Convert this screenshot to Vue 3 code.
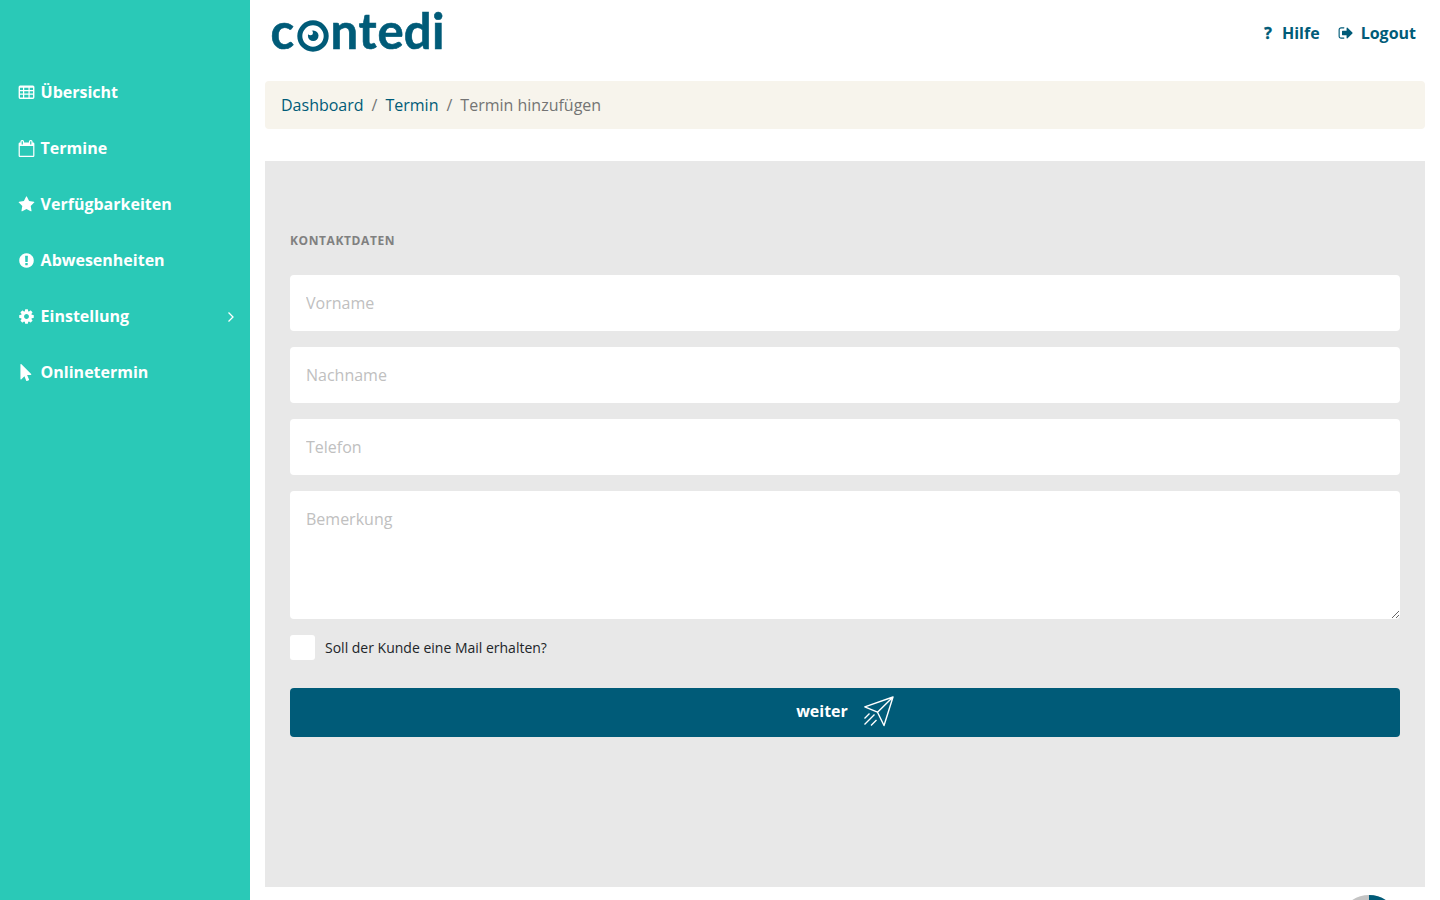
<template>
  <div class="layout">
    <aside class="sidebar">
      <nav class="sidebar-nav">
        <a v-for="item in menuItems" :key="item.label" class="sidebar-link" href="#">
          <svg class="sidebar-icon" viewBox="0 0 1792 1792">
            <path :d="item.icon" fill-rule="evenodd" />
          </svg>
          <span class="sidebar-label">{{ item.label }}</span>
          <svg v-if="item.hasChildren" class="sidebar-arrow" viewBox="0 0 8 12">
            <path d="M1.5 1.5 L6 6 L1.5 10.5" />
          </svg>
        </a>
      </nav>
    </aside>

    <main class="content">
      <header class="topbar">
        <svg class="logo" viewBox="0 0 190 68" role="img" aria-label="contedi">
          <text class="logo-text" y="48.6" x="5.6">c</text>
          <text class="logo-text" y="48.6" x="65.6 93.4 112.4 138.8 167">ntedi</text>
          <circle class="logo-ring" cx="48" cy="36" r="13.2" />
          <circle class="logo-pupil" cx="48.2" cy="35.8" r="5.3" />
          <circle class="logo-glint" cx="45.4" cy="32.8" r="2.5" />
        </svg>
        <div class="topbar-links">
          <a class="topbar-link" href="#">
            <span class="help-mark">?</span>
            <span>Hilfe</span>
          </a>
          <a class="topbar-link" href="#">
            <svg class="logout-icon" viewBox="0 0 1792 1792">
              <path :d="signOut" />
            </svg>
            <span>Logout</span>
          </a>
        </div>
      </header>

      <ol class="breadcrumb">
        <li><a href="#">Dashboard</a></li>
        <li><a href="#">Termin</a></li>
        <li>Termin hinzufügen</li>
      </ol>

      <form class="panel" @submit.prevent>
        <h6 class="panel-title">Kontaktdaten</h6>
        <input
          v-for="field in fields"
          :key="field.name"
          v-model="form[field.name]"
          class="field"
          type="text"
          :placeholder="field.label"
        />
        <textarea v-model="form.bemerkung" class="field field--area" placeholder="Bemerkung"></textarea>
        <label class="check">
          <input v-model="form.mail" class="check-input" type="checkbox" />
          <span>Soll der Kunde eine Mail erhalten?</span>
        </label>
        <button class="btn-next" type="submit">
          <span>weiter</span>
          <svg class="plane" viewBox="0 0 30 31">
            <path d="M29 1 L.8 10.8 L13.5 16.2 L20 29.5 Z M29 1 L13.5 16.2" />
            <path d="M5.5 17.5 L.5 22.5 M10.5 18.5 L.5 28.5 M12.5 24 L7 29.5" />
          </svg>
        </button>
      </form>
    </main>

    <svg class="ring" viewBox="0 0 60 60">
      <circle class="ring-track" cx="30" cy="30" r="27" />
      <path class="ring-value" d="M30 3 A27 27 0 0 1 57 30" />
    </svg>
  </div>
</template>

<script setup>
import { reactive } from 'vue'

const menuItems = [
  {
    label: 'Übersicht',
    icon: 'M224 160H1570Q1730 160 1730 320V1408Q1730 1568 1570 1568H224Q64 1568 64 1408V320Q64 160 224 160ZM208 400V640H528V400ZM656 400V640H1104V400ZM1232 400V640H1586V400ZM208 768V1008H528V768ZM656 768V1008H1104V768ZM1232 768V1008H1586V768ZM208 1136V1424H528V1136ZM656 1136V1424H1104V1136ZM1232 1136V1424H1586V1136Z',
  },
  {
    label: 'Termine',
    icon: 'M192 1664H1600V640H192ZM512 160Q512 128 480 128H416Q384 128 384 160V448Q384 480 416 480H480Q512 480 512 448ZM1408 160Q1408 128 1376 128H1312Q1280 128 1280 160V448Q1280 480 1312 480H1376Q1408 480 1408 448ZM1728 384V1664Q1728 1792 1600 1792H192Q64 1792 64 1664V384Q64 256 192 256H256V160Q256 0 416 0H480Q640 0 640 160V256H1152V160Q1152 0 1312 0H1376Q1536 0 1536 160V256H1600Q1728 256 1728 384Z',
  },
  {
    label: 'Verfügbarkeiten',
    icon: 'M1728 647q0 22-26 48l-363 354 86 500q1 7 1 20 0 21-10.5 35.5t-30.5 14.5q-19 0-40-12l-449-236-449 236q-22 12-40 12-21 0-31.5-14.5t-10.5-35.5q0-6 2-20l86-500-364-354q-25-27-25-48 0-37 56-46l502-73 225-455q19-41 49-41t49 41l225 455 502 73q56 9 56 46z',
  },
  {
    label: 'Abwesenheiten',
    icon: 'M896 128q209 0 385.5 103t279.5 279.5 103 385.5-103 385.5-279.5 279.5-385.5 103-385.5-103-279.5-279.5-103-385.5 103-385.5 279.5-279.5 385.5-103zm128 1247v-190q0-14-9-23.5t-22-9.5h-192q-13 0-23 10t-10 23v190q0 13 10 23t23 10h192q13 0 22-9.5t9-23.5zm-2-344l18-621q0-12-10-18-10-8-24-8h-220q-14 0-24 8-10 6-10 18l17 621q0 10 10 17.5t24 7.5h185q14 0 23.5-7.5t10.5-17.5z',
  },
  {
    label: 'Einstellung',
    hasChildren: true,
    icon: 'M1152 896q0-106-75-181t-181-75-181 75-75 181 75 181 181 75 181-75 75-181zm512-109v222q0 12-8 23t-20 13l-185 28q-19 54-39 91 35 50 107 138 10 12 10 25t-9 23q-27 37-99 108t-94 71q-12 0-26-9l-138-108q-44 23-91 38-16 136-29 186-7 28-36 28h-222q-14 0-24.5-8.5t-11.5-21.5l-28-184q-49-16-90-37l-141 107q-10 9-25 9-14 0-25-11-126-114-165-168-7-10-7-23 0-12 8-23 15-21 51-66.5t54-70.5q-27-50-41-99l-183-27q-13-2-21-12.5t-8-23.5v-222q0-12 8-23t19-13l186-28q14-46 39-92-40-57-107-138-10-12-10-24 0-10 9-23 26-36 98.5-107.5t94.5-71.5q13 0 26 10l138 107q44-23 91-38 16-136 29-186 7-28 36-28h222q14 0 24.5 8.5t11.5 21.5l28 184q49 16 90 37l142-107q9-9 24-9 13 0 25 10 129 119 165 170 7 8 7 22 0 12-8 23-15 21-51 66.5t-54 70.5q26 50 41 98l183 28q13 2 21 12.5t8 23.5z',
  },
  {
    label: 'Onlinetermin',
    icon: 'M1389 1043q31 30 14 69-17 40-59 40h-382l201 476q10 25 0 49t-34 35l-177 75q-25 10-49 0t-35-34l-191-452-312 312q-19 19-45 19-12 0-24-5-40-17-40-59v-1504q0-42 40-59 12-5 24-5 27 0 45 19z',
  },
]

const signOut =
  'M704 1440q0 4 1 20t.5 26.5-3 23.5-10 19.5-20.5 6.5h-320q-119 0-203.5-84.5t-84.5-203.5v-704q0-119 84.5-203.5t203.5-84.5h320q13 0 22.5 9.5t9.5 22.5q0 4 1 20t.5 26.5-3 23.5-10 19.5-20.5 6.5h-320q-66 0-113 47t-47 113v704q0 66 47 113t113 47h312l11.5 1 11.5 3 8 5.5 7 9 2 13.5zm928-544q0 26-19 45l-544 544q-19 19-45 19t-45-19-19-45v-288h-448q-26 0-45-19t-19-45v-384q0-26 19-45t45-19h448v-288q0-26 19-45t45-19 45 19l544 544q19 19 19 45z'

const fields = [
  { name: 'vorname', label: 'Vorname' },
  { name: 'nachname', label: 'Nachname' },
  { name: 'telefon', label: 'Telefon' },
]

const form = reactive({
  vorname: '',
  nachname: '',
  telefon: '',
  bemerkung: '',
  mail: false,
})
</script>

<style>
body {
  overflow: hidden;
  background: #fff;
}
</style>

<style scoped>
.layout {
  position: relative;
  display: flex;
  height: 100vh;
  overflow: hidden;
  font-family: 'Open Sans', sans-serif;
  font-size: 16px;
  line-height: 24px;
  color: #212529;
}

.layout * {
  box-sizing: border-box;
}

a {
  color: #005b78;
  text-decoration: none;
}

.sidebar {
  flex: 0 0 250px;
  padding-top: 64px;
  background: #2ac9b7;
}

.sidebar-link {
  display: flex;
  align-items: center;
  height: 56px;
  padding: 0 15px 0 18px;
  font-weight: 700;
  color: #fff;
}

.sidebar-icon {
  width: 17px;
  height: 17px;
  margin-right: 5.6px;
  fill: currentColor;
}

.sidebar-label {
  flex: 1;
}

.sidebar-arrow {
  width: 8px;
  height: 12px;
  margin-top: 2px;
  fill: none;
  stroke: currentColor;
  stroke-width: 1.3;
}

.content {
  flex: 1;
  padding: 0 15px;
}

.topbar {
  display: flex;
  justify-content: space-between;
  height: 81px;
}

.logo {
  width: 190px;
  height: 68px;
}

.logo-text {
  font-family: Lato, sans-serif;
  font-size: 49px;
  font-weight: 700;
  fill: #005b78;
  stroke: #005b78;
  stroke-width: 0.6;
}

.logo-ring {
  fill: #fff;
  stroke: #005b78;
  stroke-width: 5;
}

.logo-pupil {
  fill: #005b78;
}

.logo-glint {
  fill: #fff;
}

.topbar-links {
  display: flex;
  gap: 18px;
  padding: 21px 9px 0 0;
}

.topbar-link {
  display: flex;
  height: 24px;
  font-weight: 700;
}

.help-mark {
  margin-right: 10px;
  -webkit-text-stroke: 0.4px currentColor;
}

.logout-icon {
  width: 16px;
  height: 16px;
  margin: 4px 7px 0 0;
  fill: currentColor;
}

.breadcrumb {
  display: flex;
  height: 48px;
  margin: 0 0 32px;
  padding: 12px 16px;
  list-style: none;
  color: #6c757d;
  background: #f7f4ec;
  border-radius: 4px;
}

.breadcrumb li {
  color: #747474;
}

.breadcrumb li + li::before {
  content: '/';
  padding: 0 8px;
}

.panel {
  display: flex;
  flex-direction: column;
  height: 726px;
  padding: 72px 25px 0;
  background: #e8e8e8;
}

.panel-title {
  margin: 0 0 26px;
  font-size: 12px;
  line-height: 16px;
  font-weight: 700;
  letter-spacing: 0.6px;
  text-transform: uppercase;
  color: #808080;
}

.field {
  flex: none;
  width: 100%;
  height: 56px;
  margin: 0 0 16px;
  padding: 16px;
  font-family: inherit;
  font-size: 16px;
  line-height: 24px;
  background: #fff;
  border: 0;
  border-radius: 4px;
  outline: 0;
}

.field::placeholder {
  color: #c0c0c0;
  opacity: 1;
}

.field--area {
  height: 128px;
  resize: vertical;
}

.check {
  display: flex;
  align-items: center;
  gap: 10px;
  height: 25px;
  margin-bottom: 28px;
  font-size: 14px;
}

.check-input {
  width: 25px;
  height: 25px;
  margin: 0;
  appearance: none;
  background: #fff;
  border-radius: 3px;
}

.btn-next {
  display: flex;
  align-items: center;
  justify-content: center;
  gap: 16px;
  height: 49px;
  padding: 0 0 3px;
  font-family: inherit;
  font-size: 16px;
  font-weight: 700;
  color: #fff;
  background: #005b78;
  border: 0;
  border-radius: 4px;
}

.plane {
  width: 30px;
  height: 31px;
  fill: none;
  stroke: currentColor;
  stroke-width: 1.4;
  stroke-linejoin: round;
}

/* progress indicator that peeks in at the lower edge */
.ring {
  position: absolute;
  left: 1339px;
  top: 895px;
  width: 60px;
  height: 60px;
  fill: none;
  stroke-width: 6;
}

.ring-track {
  stroke: #c4c4c4;
}

.ring-value {
  stroke: #005b78;
}
</style>
